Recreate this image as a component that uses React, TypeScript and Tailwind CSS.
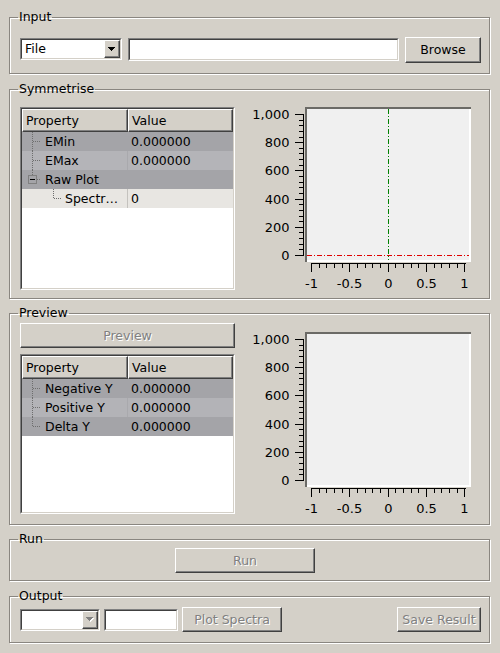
import React from "react";

const raised =
  "border border-t-white border-l-white border-r-[#404040] border-b-[#404040] shadow-[inset_-1px_-1px_0_#808080] bg-[#d4d0c8]";

function Sunken({
  className = "",
  innerClassName = "",
  children,
}: {
  className?: string;
  innerClassName?: string;
  children?: React.ReactNode;
}) {
  return (
    <div className={`border border-t-[#808080] border-l-[#808080] border-r-white border-b-white ${className}`}>
      <div
        className={`h-full border border-t-[#404040] border-l-[#404040] border-r-[#d4d0c8] border-b-[#d4d0c8] ${innerClassName}`}
      >
        {children}
      </div>
    </div>
  );
}

function Group({
  title,
  className = "",
  children,
}: {
  title: string;
  className?: string;
  children?: React.ReactNode;
}) {
  return (
    <fieldset
      className={`ml-[9px] mr-[10px] min-w-0 border border-[#8a8680] shadow-[inset_1px_1px_0_#ffffff,1px_1px_0_#ffffff] pl-[10px] pr-[8px] ${className}`}
    >
      <legend className="ml-[-2px] px-[1px] leading-[14px]">{title}</legend>
      {children}
    </fieldset>
  );
}

function Arrow({ disabled = false }: { disabled?: boolean }) {
  return (
    <svg width="8" height="5" className="block">
      {disabled && (
        <path d="M1 1h7v1h-1v1h-1v1h-1v1h-1v-1h-1v-1h-1v-1h-1z" fill="#ffffff" />
      )}
      <path
        d="M0 0h7v1h-1v1h-1v1h-1v1h-1v-1h-1v-1h-1v-1h-1z"
        fill={disabled ? "#808080" : "#000000"}
      />
    </svg>
  );
}

function Combo({ width, text, disabled = false }: { width: string; text: string; disabled?: boolean }) {
  return (
    <Sunken className={`${width} h-[22px] shrink-0`} innerClassName="bg-white flex items-stretch">
      <div className="flex-1 pl-[3px] flex items-center">{text}</div>
      <div className={`w-[16px] ${raised} flex items-center justify-center`}>
        <Arrow disabled={disabled} />
      </div>
    </Sunken>
  );
}

function Button({
  className = "",
  children,
  disabled = false,
}: {
  className?: string;
  children: React.ReactNode;
  disabled?: boolean;
}) {
  return (
    <div
      className={`${raised} flex items-center justify-center shrink-0 ${
        disabled ? "text-[#808080] [text-shadow:1px_1px_0_#ffffff]" : "text-black"
      } ${className}`}
    >
      {children}
    </div>
  );
}

const DOT = "#6e6e6e";

function Branch({ last = false }: { last?: boolean }) {
  return (
    <svg width="23" height="19" className="block shrink-0" shapeRendering="crispEdges">
      <line x1="10.5" y1="0" x2="10.5" y2={last ? 10 : 19} stroke={DOT} strokeDasharray="1,1" />
      <line x1="11" y1="9.5" x2="19" y2="9.5" stroke={DOT} strokeDasharray="1,1" />
    </svg>
  );
}

function ExpandBranch() {
  return (
    <svg width="23" height="19" className="block shrink-0" shapeRendering="crispEdges">
      <line x1="10.5" y1="0" x2="10.5" y2="5" stroke={DOT} strokeDasharray="1,1" />
      <rect x="6.5" y="5.5" width="8" height="8" fill="none" stroke="#808080" />
      <line x1="8" y1="9.5" x2="13" y2="9.5" stroke="#000000" />
      <line x1="15" y1="9.5" x2="19" y2="9.5" stroke={DOT} strokeDasharray="1,1" />
    </svg>
  );
}

function ChildBranch() {
  return (
    <svg width="43" height="19" className="block shrink-0" shapeRendering="crispEdges">
      <line x1="31.5" y1="0" x2="31.5" y2="10" stroke={DOT} strokeDasharray="1,1" />
      <line x1="32" y1="9.5" x2="40" y2="9.5" stroke={DOT} strokeDasharray="1,1" />
    </svg>
  );
}

function Row({
  bg,
  divider,
  decor,
  name,
  value,
}: {
  bg: string;
  divider: string;
  decor: React.ReactNode;
  name: string;
  value: string;
}) {
  return (
    <div className={`flex h-[19px] ${bg}`}>
      <div className={`w-[106px] flex items-center border-r ${divider} overflow-hidden whitespace-nowrap`}>
        {decor}
        <span>{name}</span>
      </div>
      <div className="flex-1 pl-[3px] flex items-center">{value}</div>
    </div>
  );
}

function Header() {
  return (
    <div className="flex h-[23px]">
      <div className={`w-[106px] ${raised} pl-[3px] flex items-center`}>Property</div>
      <div className={`flex-1 ${raised} pl-[3px] flex items-center`}>Value</div>
    </div>
  );
}

function Plot({ markers }: { markers: boolean }) {
  const yPos = (v: number) => Math.round(148 - v * 0.141) + 0.5;
  const xPos = (v: number) => Math.round(142.7 + v * 76.7) + 0.5;
  const yMajor = [0, 200, 400, 600, 800, 1000];
  const yMinor: number[] = [];
  for (let v = 0; v <= 1000; v += 40) if (v % 200 !== 0) yMinor.push(v);
  const xMajor = [-1, -0.5, 0, 0.5, 1];
  const xMinor: number[] = [];
  for (let i = -10; i <= 10; i++) if (i % 5 !== 0) xMinor.push(i / 10);
  const labels: Record<string, string> = { "-1": "-1", "-0.5": "-0.5", "0": "0", "0.5": "0.5", "1": "1" };
  return (
    <svg width="235" height="183" className="block shrink-0" shapeRendering="crispEdges">
      <rect x="60" y="0" width="166" height="155" fill="#ffffff" />
      <rect x="62" y="2" width="162" height="151" fill="#f0f0f0" />
      <rect x="60" y="0" width="166" height="2" fill="#6b6a66" />
      <rect x="60" y="0" width="2" height="155" fill="#6b6a66" />
      {markers && (
        <>
          <line x1="143.5" y1="2" x2="143.5" y2="153" stroke="#008000" strokeDasharray="5,2,1,2" />
          <line x1="62" y1="148.5" x2="224" y2="148.5" stroke="#e00000" strokeDasharray="5,2,1,2" />
        </>
      )}
      <line x1="58.5" y1="7" x2="58.5" y2="149" stroke="#000" />
      {yMajor.map((v) => (
        <line key={"ym" + v} x1="50" y1={yPos(v)} x2="58" y2={yPos(v)} stroke="#000" />
      ))}
      {yMinor.map((v) => (
        <line key={"yn" + v} x1="54" y1={yPos(v)} x2="58" y2={yPos(v)} stroke="#000" />
      ))}
      {yMajor.map((v) => (
        <text
          key={"yl" + v}
          x="44.5"
          y={yPos(v)}
          textAnchor="end"
          dominantBaseline="central"
          fontFamily="DejaVu Sans, sans-serif"
          fontSize="13"
          fill="#000"
        >
          {v === 1000 ? "1,000" : String(v)}
        </text>
      ))}
      <line x1="66" y1="156.5" x2="221" y2="156.5" stroke="#000" />
      {xMajor.map((v) => (
        <line key={"xm" + v} x1={xPos(v)} y1="156" x2={xPos(v)} y2="165" stroke="#000" />
      ))}
      {xMinor.map((v) => (
        <line key={"xn" + v} x1={xPos(v)} y1="156" x2={xPos(v)} y2="161" stroke="#000" />
      ))}
      {xMajor.map((v) => (
        <text
          key={"xl" + v}
          x={xPos(v)}
          y="176.5"
          textAnchor="middle"
          dominantBaseline="central"
          fontFamily="DejaVu Sans, sans-serif"
          fontSize="13"
          fill="#000"
        >
          {labels[String(v)]}
        </text>
      ))}
    </svg>
  );
}

export default function App() {
  return (
    <div className="w-[500px] h-[653px] overflow-hidden bg-[#d4d0c8] pt-[10px] text-[12.5px] leading-[14px] text-black font-['DejaVu_Sans',sans-serif]">
      <Group title="Input" className="pt-[13px] pb-[10px]">
        <div className="flex items-start h-[26px] gap-[6px]">
          <div className="mt-[1px]">
            <Combo width="w-[102px]" text="File" />
          </div>
          <Sunken className="flex-1 h-[23px] mt-[1px]" innerClassName="bg-white" />
          <Button className="w-[76px] h-[26px]">Browse</Button>
        </div>
      </Group>

      <Group title="Symmetrise" className="mt-[8px] pt-[11px] pb-[8px]">
        <div className="flex items-start gap-[10px]">
          <Sunken className="w-[215px] h-[183px] shrink-0" innerClassName="bg-white">
            <Header />
            <Row bg="bg-[#a4a4a8]" divider="border-[#a4a4a8]" decor={<Branch />} name="EMin" value="0.000000" />
            <Row bg="bg-[#b4b4b8]" divider="border-[#a9a9ad]" decor={<Branch />} name="EMax" value="0.000000" />
            <Row bg="bg-[#a4a4a8]" divider="border-[#a4a4a8]" decor={<ExpandBranch />} name="Raw Plot" value="" />
            <Row bg="bg-[#e8e6e2]" divider="border-[#c4c2be]" decor={<ChildBranch />} name="Spectr…" value="0" />
          </Sunken>
          <Plot markers={true} />
        </div>
      </Group>

      <Group title="Preview" className="mt-[7px] pt-[3px] pb-[9px]">
        <div className="flex items-start gap-[10px]">
          <div className="w-[215px] shrink-0 flex flex-col gap-[6px]">
            <Button disabled className="w-[215px] h-[25px]">Preview</Button>
            <Sunken className="w-[215px] h-[160px]" innerClassName="bg-white">
              <Header />
              <Row bg="bg-[#a4a4a8]" divider="border-[#a4a4a8]" decor={<Branch />} name="Negative Y" value="0.000000" />
              <Row bg="bg-[#b3b3b7]" divider="border-[#a9a9ad]" decor={<Branch />} name="Positive Y" value="0.000000" />
              <Row bg="bg-[#a4a4a8]" divider="border-[#a4a4a8]" decor={<Branch last />} name="Delta Y" value="0.000000" />
            </Sunken>
          </div>
          <div className="mt-[9px]">
            <Plot markers={false} />
          </div>
        </div>
      </Group>

      <Group title="Run" className="mt-[7px] pt-[2px] pb-[7px]">
        <div className="flex">
          <Button disabled className="ml-[155px] w-[140px] h-[25px]">Run</Button>
        </div>
      </Group>

      <Group title="Output" className="mt-[8px] pt-[4px] pb-[10px]">
        <div className="flex items-center h-[25px]">
          <Combo width="w-[80px]" text="" disabled />
          <Sunken className="ml-[4px] w-[74px] h-[22px]" innerClassName="bg-white" />
          <Button disabled className="ml-[4px] w-[100px] h-[25px]">Plot Spectra</Button>
          <div className="flex-1" />
          <Button disabled className="w-[84px] h-[25px]">Save Result</Button>
        </div>
      </Group>
    </div>
  );
}
